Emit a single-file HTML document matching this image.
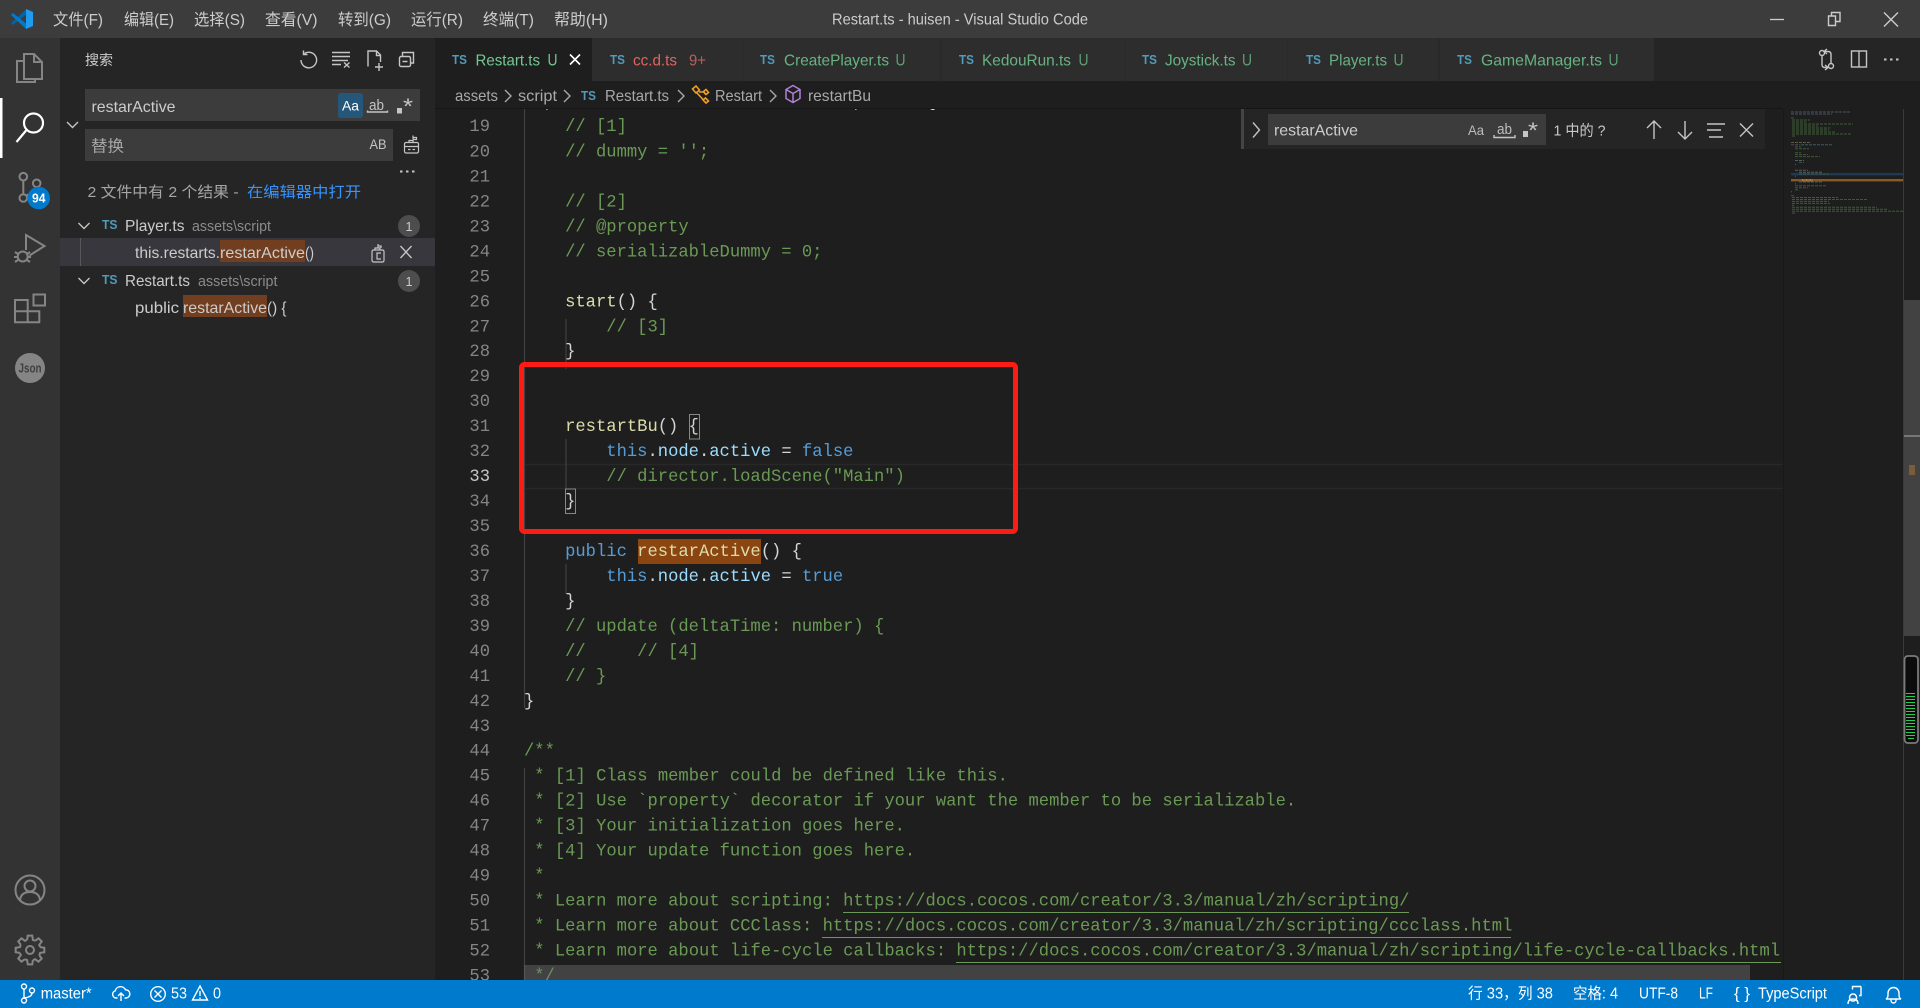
<!DOCTYPE html>
<html lang="zh-CN">
<head>
<meta charset="utf-8">
<title>Restart.ts - huisen - Visual Studio Code</title>
<style>
html,body{margin:0;padding:0;background:#1e1e1e;width:1920px;height:1008px;overflow:hidden}
svg{display:block;position:absolute;left:0;top:0}
text{white-space:pre}
.s{font-family:"Liberation Sans","Noto Sans CJK SC",sans-serif;font-size:16px;fill:#ccc}
.m{font-family:"Liberation Mono","DejaVu Sans Mono",monospace;font-size:17.17px;fill:#d4d4d4}
.n{fill:#858585;text-anchor:end}
.c{fill:#6a9955}.k{fill:#569cd6}.v{fill:#9cdcfe}.f{fill:#dcdcaa}
.ts{font-family:"Liberation Sans",sans-serif;font-size:13px;font-weight:700;fill:#519aba}
.g{fill:#66b380}.u{fill:#5f9f75}
.w{fill:#fff;font-size:15.5px}
.ic{fill:none;stroke:#c5c5c5;stroke-width:1.4}
.ac{fill:none;stroke:#858585;stroke-width:2}
.st{fill:none;stroke:#fff;stroke-width:1.4}
</style>
</head>
<body>
<svg width="1920" height="1008" viewBox="0 0 1920 1008" xmlns="http://www.w3.org/2000/svg">
<!-- editor -->
<rect x="435" y="81" width="1485" height="899" fill="#1e1e1e"/>
<!-- current line -->
<path d="M525 464.5H1783M525 488.5H1783" stroke="#282828" stroke-width="1.4"/>
<!-- indent guides -->
<path d="M524.5 109V708M524.5 768V980M566 319V369M566 439V489M566 564V594" stroke="#404040" stroke-width="1.2"/>
<!-- highlights -->
<rect x="638" y="539" width="123" height="25" fill="#8a4510"/>
<rect x="689.5" y="414.5" width="10" height="24.5" fill="none" stroke="#888" stroke-width="1"/>
<rect x="565.5" y="489" width="10" height="24.5" fill="none" stroke="#888" stroke-width="1"/>
<!-- line numbers -->
<g class="m">
<text class="m n" x="490" y="131.2">19</text><text class="m n" x="490" y="156.3">20</text><text class="m n" x="490" y="181.4">21</text><text class="m n" x="490" y="206.4">22</text><text class="m n" x="490" y="231.4">23</text><text class="m n" x="490" y="256.3">24</text><text class="m n" x="490" y="281.3">25</text><text class="m n" x="490" y="306.3">26</text><text class="m n" x="490" y="331.3">27</text><text class="m n" x="490" y="356.2">28</text><text class="m n" x="490" y="381.2">29</text><text class="m n" x="490" y="406.2">30</text><text class="m n" x="490" y="431.1">31</text><text class="m n" x="490" y="456.1">32</text><text class="m" style="fill:#c6c6c6;text-anchor:end" x="490" y="481.1">33</text><text class="m n" x="490" y="506">34</text><text class="m n" x="490" y="531">35</text><text class="m n" x="490" y="556">36</text><text class="m n" x="490" y="581">37</text><text class="m n" x="490" y="605.9">38</text><text class="m n" x="490" y="630.9">39</text><text class="m n" x="490" y="655.9">40</text><text class="m n" x="490" y="680.8">41</text><text class="m n" x="490" y="705.8">42</text><text class="m n" x="490" y="730.8">43</text><text class="m n" x="490" y="755.7">44</text><text class="m n" x="490" y="780.7">45</text><text class="m n" x="490" y="805.7">46</text><text class="m n" x="490" y="830.7">47</text><text class="m n" x="490" y="855.6">48</text><text class="m n" x="490" y="880.6">49</text><text class="m n" x="490" y="905.6">50</text><text class="m n" x="490" y="930.5">51</text><text class="m n" x="490" y="955.5">52</text><text class="m n" x="490" y="980.5">53</text>
</g>
<!-- code -->
<text class="m" x="524" y="106.5"><tspan style="fill:#c586c0">export</tspan> <tspan class="k">class</tspan> <tspan style="fill:#4ec9b0">Restart</tspan> <tspan class="k">extends</tspan> <tspan style="fill:#4ec9b0">Component</tspan> {</text>
<text class="m c" x="565.1" y="131.2">// [1]</text>
<text class="m c" x="565.1" y="156.3">// dummy = '';</text>
<text class="m c" x="565.1" y="206.4">// [2]</text>
<text class="m c" x="565.1" y="231.4">// @property</text>
<text class="m c" x="565.1" y="256.3">// serializableDummy = 0;</text>
<text class="m" x="565.1" y="306.3"><tspan class="f">start</tspan>() {</text>
<text class="m c" x="606.3" y="331.3">// [3]</text>
<text class="m" x="565.1" y="356.2">}</text>
<text class="m" x="565.1" y="431.1"><tspan class="f">restartBu</tspan>() {</text>
<text class="m" x="606.3" y="456.1"><tspan class="k">this</tspan>.<tspan class="v">node</tspan>.<tspan class="v">active</tspan> = <tspan class="k">false</tspan></text>
<text class="m c" x="606.3" y="481.1">// director.loadScene("Main")</text>
<text class="m" x="565.1" y="506">}</text>
<text class="m" x="565.1" y="556"><tspan class="k">public</tspan> <tspan class="f">restarActive</tspan>() {</text>
<text class="m" x="606.3" y="581"><tspan class="k">this</tspan>.<tspan class="v">node</tspan>.<tspan class="v">active</tspan> = <tspan class="k">true</tspan></text>
<text class="m" x="565.1" y="605.9">}</text>
<text class="m c" x="565.1" y="630.9">// update (deltaTime: number) {</text>
<text class="m c" x="565.1" y="655.9">//     // [4]</text>
<text class="m c" x="565.1" y="680.8">// }</text>
<text class="m" x="524" y="705.8">}</text>
<text class="m c" x="524" y="755.7">/**</text>
<text class="m c" x="524" y="780.7"> * [1] Class member could be defined like this.</text>
<text class="m c" x="524" y="805.7"> * [2] Use `property` decorator if your want the member to be serializable.</text>
<text class="m c" x="524" y="830.7"> * [3] Your initialization goes here.</text>
<text class="m c" x="524" y="855.6"> * [4] Your update function goes here.</text>
<text class="m c" x="524" y="880.6"> *</text>
<text class="m c" x="524" y="905.6"> * Learn more about scripting: https://docs.cocos.com/creator/3.3/manual/zh/scripting/</text>
<text class="m c" x="524" y="930.5"> * Learn more about CCClass: https://docs.cocos.com/creator/3.3/manual/zh/scripting/ccclass.html</text>
<text class="m c" x="524" y="955.5"> * Learn more about life-cycle callbacks: https://docs.cocos.com/creator/3.3/manual/zh/scripting/life-cycle-callbacks.html</text>
<text class="m c" x="524" y="980.5"> */</text>
<path d="M843 912.5H1409M822 937.5H1511M956 962.5H1781" stroke="#6a9955" stroke-width="1"/>
<!-- horizontal scrollbar -->
<rect x="524" y="965" width="1226" height="15" fill="#797979" fill-opacity=".4"/>
<!-- red annotation -->
<rect x="521.5" y="364.5" width="494" height="167" rx="3" fill="none" stroke="#fc1c14" stroke-width="5"/>

<!-- minimap -->
<rect x="1783" y="109" width="120" height="871" fill="#1e1e1e"/>
<rect x="1783" y="109" width="1" height="871" fill="#181818"/>
<rect x="1791" y="173" width="112" height="2.4" fill="#1f3a55"/>
<rect x="1791" y="179" width="112" height="2.4" fill="#8b5a1e"/>
<rect x="1802" y="179" width="11" height="2.4" fill="#c77a1a"/>
<g stroke-width="1" stroke-dasharray="3 1">
<path d="M1791 112H1850M1791 114H1832" stroke="#4a5566"/>
<path d="M1791 142.500H1810" stroke="#5c5c46"/>
<path d="M1791 144.800H1800" stroke="#5c465a"/>
<path d="M1801 144.800H1832" stroke="#3c5c62"/>
<path stroke="#3f5a35" d="M1791 118H1794M1792 120H1810M1792 122H1806M1792 124H1853M1792 126H1818M1792 128H1830M1792 130H1829M1792 132H1835M1792 134H1851M1792 136H1795M1795 146.800h6M1795 148.800h14M1795 152.700h6M1795 154.600h13M1795 156.600h25M1799 162.400h5M1799 174.100h30M1795 185.800h31M1795 187.800h13M1795 189.700h4M1791 195.600h3M1792 197.500h46M1792 199.500h75M1792 201.400h37M1792 203.400h38M1792 205.300h2M1792 207.300h85M1792 209.200h95M1792 211.200h111M1792 213.100h3"/>
<path stroke="#50606a" d="M1795 160.500h9M1795 164.400h1M1795 170.200h13M1799 172.200h24M1795 176.100h1M1795 180h23M1799 181.900h23M1795 183.900h1M1791 191.700h1"/>
</g>
<!-- vertical scrollbar -->
<rect x="1903" y="109" width="1" height="871" fill="#3a3a3a"/>
<rect x="1904" y="300" width="16" height="336" fill="#424242"/>
<rect x="1904" y="435" width="16" height="2" fill="#777"/>
<rect x="1909" y="465" width="6" height="10" fill="#7a5c38"/>
<rect x="1904.500" y="656" width="13.500" height="87" rx="3.500" fill="#0c0c0c" stroke="#7a7a7a" stroke-width="1.800"/>
<path stroke="#22cf4e" stroke-width="1.100" d="M1906 693.500h9M1906 696.500h9M1906 699.500h9M1906 702.500h9M1906 705.500h9M1906 708.500h9M1906 711.500h9M1906 714.500h9M1906 717.500h9M1906 720.500h9M1906 723.500h9M1906 726.500h9M1906 729.500h9M1906 732.500h9M1906 735.500h9M1908 738.500h6"/>

<!-- find widget -->
<rect x="1241" y="109" width="524" height="40" fill="#252526"/>
<rect x="1241" y="109" width="3" height="40" fill="#454545"/>
<rect x="1268" y="114" width="278" height="31" fill="#3c3c3c"/>
<path class="ic" d="M1253 122.500l6.500 7.500-6.500 7.500"/>
<text class="s" x="1274" y="135.500" textLength="84" lengthAdjust="spacingAndGlyphs">restarActive</text>
<text class="s" style="fill:#bdbdbd;font-size:14px" x="1468" y="135" textLength="16" lengthAdjust="spacingAndGlyphs">Aa</text>
<text class="s" style="fill:#bdbdbd;font-size:15px" x="1497" y="134" textLength="15" lengthAdjust="spacingAndGlyphs">ab</text>
<path class="ic" d="M1494 135v2.500h21V135"/>
<rect x="1523" y="131" width="5" height="6" fill="#c5c5c5"/>
<text class="s" style="fill:#c5c5c5;font-size:22px" x="1528" y="138" textLength="10" lengthAdjust="spacingAndGlyphs">*</text>
<text class="s" style="fill:#c8c8c8;font-size:15px" x="1553.500" y="135.500" textLength="52" lengthAdjust="spacingAndGlyphs">1 中的 ?</text>
<path class="ic" d="M1654 139V121M1647 128l7-7 7 7M1685 121v18M1678 132l7 7 7-7M1707 124h18M1707 130h14M1709 137h14M1740 123.500l13 13M1753 123.500l-13 13"/>

<!-- breadcrumb -->
<rect x="435" y="81" width="1485" height="28" fill="#1e1e1e"/>
<rect x="435" y="108" width="1348" height="1" fill="#161616"/>
<text class="s" style="fill:#a9a9a9" x="455" y="101" textLength="43" lengthAdjust="spacingAndGlyphs">assets</text>
<path class="ic" style="stroke:#a9a9a9" d="M505 90l6 6-6 6M564 90l6 6-6 6M678 90l6 6-6 6M770 90l6 6-6 6"/>
<text class="s" style="fill:#a9a9a9" x="518" y="101" textLength="39" lengthAdjust="spacingAndGlyphs">script</text>
<text class="ts" x="581" y="100" textLength="15" lengthAdjust="spacingAndGlyphs">TS</text>
<text class="s" style="fill:#a9a9a9" x="605" y="101" textLength="64" lengthAdjust="spacingAndGlyphs">Restart.ts</text>
<g fill="none" stroke="#ee9d28" stroke-width="1.600">
<path d="M692.500 89l3.500-3 3.500 4-3.500 3zM703.500 91.500l2.500-2 2.500 3-2.500 2zM703 100l2.500-2 3 3-2.500 2z"/>
<path d="M699 92h5l1 2M697 93l6 6.500"/>
</g>
<text class="s" style="fill:#a9a9a9" x="715" y="101" textLength="47" lengthAdjust="spacingAndGlyphs">Restart</text>
<path d="M793 85.500l7 4v9l-7 4-7-4v-9zM786 89.500l7 4 7-4M793 93.500v9" fill="none" stroke="#b180d7" stroke-width="1.500"/>
<text class="s" style="fill:#a9a9a9" x="808" y="101" textLength="63" lengthAdjust="spacingAndGlyphs">restartBu</text>

<!-- tab bar -->
<rect x="435" y="38" width="1485" height="43" fill="#252526"/>
<rect x="435" y="38" width="157" height="43" fill="#1e1e1e"/>
<path d="M592 38h150v43H592zM742.500 38h198v43h-198zM941.500 38h182.500v43H941.500zM1124.500 38h162.500v43h-162.500zM1287.500 38h151v43h-151zM1439.500 38h214.500v43h-214.500z" fill="#2d2d2d"/>
<text class="ts" x="452" y="64" textLength="15" lengthAdjust="spacingAndGlyphs">TS</text>
<text class="s" style="fill:#73c991" x="475.500" y="65.500" textLength="64.500" lengthAdjust="spacingAndGlyphs">Restart.ts</text>
<text class="s" style="fill:#73c991;font-size:17px" x="547.500" y="65.500" textLength="10" lengthAdjust="spacingAndGlyphs">U</text>
<path d="M570 54.500l10 10M580 54.500l-10 10" stroke="#fff" stroke-width="1.600" fill="none"/>
<text class="ts" x="610" y="64" textLength="15" lengthAdjust="spacingAndGlyphs">TS</text>
<text class="s" style="fill:#e2645d" x="633" y="65.500" textLength="44" lengthAdjust="spacingAndGlyphs">cc.d.ts</text>
<text class="s" style="fill:#b9605a" x="689" y="65.500" textLength="17" lengthAdjust="spacingAndGlyphs">9+</text>
<text class="ts" x="760" y="64" textLength="15" lengthAdjust="spacingAndGlyphs">TS</text>
<text class="s g" x="784" y="65.500" textLength="105" lengthAdjust="spacingAndGlyphs">CreatePlayer.ts</text>
<text class="s u" style="font-size:17px" x="895.500" y="65.500" textLength="10" lengthAdjust="spacingAndGlyphs">U</text>
<text class="ts" x="959" y="64" textLength="15" lengthAdjust="spacingAndGlyphs">TS</text>
<text class="s g" x="982" y="65.500" textLength="89" lengthAdjust="spacingAndGlyphs">KedouRun.ts</text>
<text class="s u" style="font-size:17px" x="1078.500" y="65.500" textLength="10" lengthAdjust="spacingAndGlyphs">U</text>
<text class="ts" x="1142" y="64" textLength="15" lengthAdjust="spacingAndGlyphs">TS</text>
<text class="s g" x="1165" y="65.500" textLength="70.500" lengthAdjust="spacingAndGlyphs">Joystick.ts</text>
<text class="s u" style="font-size:17px" x="1242" y="65.500" textLength="10" lengthAdjust="spacingAndGlyphs">U</text>
<text class="ts" x="1306" y="64" textLength="15" lengthAdjust="spacingAndGlyphs">TS</text>
<text class="s g" x="1329" y="65.500" textLength="58" lengthAdjust="spacingAndGlyphs">Player.ts</text>
<text class="s u" style="font-size:17px" x="1393.500" y="65.500" textLength="10" lengthAdjust="spacingAndGlyphs">U</text>
<text class="ts" x="1457" y="64" textLength="15" lengthAdjust="spacingAndGlyphs">TS</text>
<text class="s g" x="1481" y="65.500" textLength="121" lengthAdjust="spacingAndGlyphs">GameManager.ts</text>
<text class="s u" style="font-size:17px" x="1608.500" y="65.500" textLength="10" lengthAdjust="spacingAndGlyphs">U</text>
<!-- editor actions -->
<g class="ic">
<circle cx="1822" cy="53" r="2.500"/><circle cx="1831" cy="66" r="2.500"/>
<path d="M1822 55.500v9q0 3 3 3h2M1831 63.500v-9q0-3-3-3h-3M1827 49l-3 2.500 3 2.500M1825 65l3 2.500-3 2.500"/>
<rect x="1851.500" y="51" width="15" height="16"/><path d="M1859 51v16"/>
</g>
<path d="M1884 59.500h2.500M1890 59.500h2.500M1896 59.500h2.500" stroke="#c5c5c5" stroke-width="2"/>

<!-- title bar -->
<rect x="0" y="0" width="1920" height="38" fill="#3c3c3c"/>
<path d="M11 23l2 2 13-10.500V9.500z" fill="#0065a9"/>
<path d="M11 15l2-2 13 10.500V29z" fill="#007acc"/>
<path d="M26 9l7 3v14l-7 3z" fill="#1f9cf0"/>
<text class="s" x="53" y="25" textLength="50" lengthAdjust="spacingAndGlyphs">文件(F)</text>
<text class="s" x="124" y="25" textLength="50" lengthAdjust="spacingAndGlyphs">编辑(E)</text>
<text class="s" x="194" y="25" textLength="51" lengthAdjust="spacingAndGlyphs">选择(S)</text>
<text class="s" x="265" y="25" textLength="52.500" lengthAdjust="spacingAndGlyphs">查看(V)</text>
<text class="s" x="338" y="25" textLength="53" lengthAdjust="spacingAndGlyphs">转到(G)</text>
<text class="s" x="411" y="25" textLength="52" lengthAdjust="spacingAndGlyphs">运行(R)</text>
<text class="s" x="483" y="25" textLength="51" lengthAdjust="spacingAndGlyphs">终端(T)</text>
<text class="s" x="554" y="25" textLength="54" lengthAdjust="spacingAndGlyphs">帮助(H)</text>
<text class="s" x="832" y="24.500" textLength="256" lengthAdjust="spacingAndGlyphs">Restart.ts - huisen - Visual Studio Code</text>
<path d="M1770 19.500h14" stroke="#ccc" stroke-width="1.300"/>
<path class="ic" style="stroke:#ccc" d="M1828.500 16h7v9.500h-7zM1831.500 16v-3.500h8.500v9h-4.500"/>
<path d="M1884 12.500l14 14M1898 12.500l-14 14" stroke="#ccc" stroke-width="1.400"/>

<!-- activity bar -->
<rect x="0" y="38" width="60" height="942" fill="#333"/>
<rect x="0" y="98" width="2.500" height="60" fill="#fff"/>
<g class="ac">
<path d="M24 54h10l8 8v17H24zM34 54v8h8M24 61h-7v21h18v-3"/>
</g>
<g fill="none" stroke="#fff" stroke-width="2.200">
<circle cx="33.500" cy="123" r="9.500"/><path d="M26.500 130l-10 12"/>
</g>
<g class="ac">
<circle cx="23.300" cy="176.700" r="3.800"/><circle cx="36.700" cy="183.300" r="3.800"/><circle cx="23.300" cy="198" r="3.800"/>
<path d="M23.300 180.500v13.700M36.700 187.100q0 5.500-10 8"/>
<path d="M26 250V235l18.500 11-15 9.500"/>
<circle cx="22.700" cy="256.500" r="5"/>
<path d="M15 252l3 2M30 252l-3 2M14 257h4M31 257h-4M15 262l3-2M30 262l-3-2"/>
<path d="M15 300h12.700v11.300H15zM15 311.300h12.700v11H15zM27.700 311.300h11.600v11H27.700zM33.500 294.500H45v11H33.500z"/>
<circle cx="30" cy="890" r="14.500"/><circle cx="30" cy="886" r="5.500"/>
<path d="M20 900q1-8 10-8t10 8"/>
<circle cx="30" cy="950" r="4"/>
<g transform="translate(30 950)">
<path id="gt" d="M10.090-2.890L14.320-2.270V2.270L10.090 2.890A10.500 10.500 0 0 1 9.180 5.090"/>
<path transform="rotate(45)" d="M10.090-2.890L14.320-2.270V2.270L10.090 2.890A10.500 10.500 0 0 1 9.180 5.090"/>
<path transform="rotate(90)" d="M10.090-2.890L14.320-2.270V2.270L10.090 2.890A10.500 10.500 0 0 1 9.180 5.090"/>
<path transform="rotate(135)" d="M10.090-2.890L14.320-2.270V2.270L10.090 2.890A10.500 10.500 0 0 1 9.180 5.090"/>
<path transform="rotate(180)" d="M10.090-2.890L14.320-2.270V2.270L10.090 2.890A10.500 10.500 0 0 1 9.180 5.090"/>
<path transform="rotate(225)" d="M10.090-2.890L14.320-2.270V2.270L10.090 2.890A10.500 10.500 0 0 1 9.180 5.090"/>
<path transform="rotate(270)" d="M10.090-2.890L14.320-2.270V2.270L10.090 2.890A10.500 10.500 0 0 1 9.180 5.090"/>
<path transform="rotate(315)" d="M10.090-2.890L14.320-2.270V2.270L10.090 2.890A10.500 10.500 0 0 1 9.180 5.090"/>
</g>
</g>
<circle cx="38.700" cy="198" r="11.300" fill="#007acc"/>
<text class="s" style="fill:#fff;font-size:12.500px;font-weight:700" x="32" y="202.500" textLength="13.500" lengthAdjust="spacingAndGlyphs">94</text>
<circle cx="30" cy="368" r="15" fill="#858585"/>
<text class="s" style="fill:#3f3f3f;font-size:13px;font-weight:700" x="18.500" y="372.500" textLength="23" lengthAdjust="spacingAndGlyphs">Json</text>

<!-- sidebar -->
<rect x="60" y="38" width="375" height="942" fill="#252526"/>
<text class="s" style="font-size:14px" x="85" y="65" textLength="28" lengthAdjust="spacingAndGlyphs">搜索</text>
<g class="ic">
<path d="M304.500 53.500a7.800 7.800 0 1 1-3.500 6.500M303.500 50.500v4h4"/>
<path d="M332 52.500h18M332 56.500h18M332 60.500h16M332 64.500h9M344 62.500l5.500 5M349.500 62.500l-5.500 5"/>
<path d="M368 66.500V51h8.500l4 4v7M376.500 51v4.500h4M379 63v8M375 67h8"/>
<rect x="399.500" y="56.500" width="11" height="10" rx="1.500"/><path d="M402.500 56.500V52.500h11V63h-3M402.500 61.500h5"/>
</g>
<rect x="85" y="89" width="335" height="32" fill="#3c3c3c"/>
<rect x="338" y="93" width="25" height="25" rx="3" fill="#245779"/>
<text class="s" style="fill:#fff;font-size:14px" x="342" y="110.500" textLength="17" lengthAdjust="spacingAndGlyphs">Aa</text>
<text class="s" x="91.500" y="112" textLength="84" lengthAdjust="spacingAndGlyphs">restarActive</text>
<text class="s" style="fill:#c5c5c5;font-size:15px" x="369" y="110" textLength="15" lengthAdjust="spacingAndGlyphs">ab</text>
<path class="ic" d="M367.500 110.500v1.500h20v-1.500"/>
<rect x="397" y="108" width="5" height="5.500" fill="#c5c5c5"/>
<text class="s" style="fill:#c5c5c5;font-size:22px" x="403" y="114" textLength="10" lengthAdjust="spacingAndGlyphs">*</text>
<path class="ic" d="M67 122l5.500 5.500 5.500-5.500"/>
<rect x="85" y="129" width="308" height="32" fill="#3c3c3c"/>
<text class="s" style="fill:#a6a6a6" x="91" y="151.500" textLength="33" lengthAdjust="spacingAndGlyphs">替换</text>
<text class="s" style="fill:#c5c5c5;font-size:13.500px" x="369.500" y="149" textLength="17" lengthAdjust="spacingAndGlyphs">AB</text>
<g class="ic" style="stroke-width:1.200">
<rect x="404.500" y="142.500" width="14" height="10.500" rx="1.500"/><path d="M404.500 146.500h14M409 142.500v-2h4v2M413 135.500v4M413 137.500h3.500v2H413M408 149.500h2.500M412.500 149.500h2.500"/>
</g>
<path d="M400 171.500h2.500M406 171.500h2.500M412 171.500h2.500" stroke="#c5c5c5" stroke-width="2"/>
<text class="s" style="fill:#a6a6a6;font-size:15px" x="87.500" y="197" textLength="155.500" lengthAdjust="spacingAndGlyphs">2 文件中有 2 个结果 - </text>
<text class="s" style="fill:#3794ff;font-size:15px" x="247" y="197" textLength="114" lengthAdjust="spacingAndGlyphs">在编辑器中打开</text>
<!-- results -->
<rect x="60" y="238" width="375" height="28" fill="#37373d"/>
<rect x="80" y="238" width="1" height="28" fill="#585858"/>
<rect x="220" y="240" width="85" height="22" fill="#713e1f"/>
<rect x="183" y="295" width="84" height="22" fill="#713e1f"/>
<path class="ic" d="M78.500 223l5.500 5.500 5.500-5.500M78.500 278l5.500 5.500 5.500-5.500"/>
<text class="ts" x="102" y="229" textLength="15.500" lengthAdjust="spacingAndGlyphs">TS</text>
<text class="s" x="125" y="231" textLength="59.500" lengthAdjust="spacingAndGlyphs">Player.ts</text>
<text class="s" style="fill:#8b8b8b;font-size:14.500px" x="192" y="231" textLength="79" lengthAdjust="spacingAndGlyphs">assets\script</text>
<circle cx="409" cy="226" r="11" fill="#4d4d4d"/>
<text class="s" style="font-size:13px" x="405.500" y="231" textLength="7" lengthAdjust="spacingAndGlyphs">1</text>
<text class="s" x="135" y="258" textLength="85" lengthAdjust="spacingAndGlyphs">this.restarts.</text>
<text class="s" x="220" y="258" textLength="85" lengthAdjust="spacingAndGlyphs">restarActive</text>
<text class="s" x="305" y="258" textLength="9" lengthAdjust="spacingAndGlyphs">()</text>
<g class="ic" style="stroke-width:1.200">
<rect x="372" y="250" width="12" height="12" rx="1.500"/><path d="M375 250v-2h5v2M378 244v4M378 246h3v2M381 253h-4v6h4"/>
</g>
<path d="M400.500 246l11 12M411.500 246l-11 12" stroke="#c5c5c5" stroke-width="1.400"/>
<text class="ts" x="102" y="284" textLength="15.500" lengthAdjust="spacingAndGlyphs">TS</text>
<text class="s" x="125" y="286" textLength="65" lengthAdjust="spacingAndGlyphs">Restart.ts</text>
<text class="s" style="fill:#8b8b8b;font-size:14.500px" x="198" y="286" textLength="79.500" lengthAdjust="spacingAndGlyphs">assets\script</text>
<circle cx="409" cy="281" r="11" fill="#4d4d4d"/>
<text class="s" style="font-size:13px" x="405.500" y="286" textLength="7" lengthAdjust="spacingAndGlyphs">1</text>
<text class="s" x="135" y="313" textLength="44" lengthAdjust="spacingAndGlyphs">public</text>
<text class="s" x="183" y="313" textLength="84" lengthAdjust="spacingAndGlyphs">restarActive</text>
<text class="s" x="267" y="313" textLength="19.500" lengthAdjust="spacingAndGlyphs">() {</text>

<!-- status bar -->
<rect x="0" y="980" width="1920" height="28" fill="#007acc"/>
<g class="st">
<circle cx="24" cy="986.500" r="2.500"/><circle cx="24" cy="1000.500" r="2.500"/><circle cx="32" cy="990.500" r="2.500"/>
<path d="M24 989v9M32 993q0 4-8 5"/>
<path d="M117.500 998h-1.500a3.700 3.700 0 0 1-.8-7.200 5.500 5.500 0 0 1 10.300-1 3.700 3.700 0 0 1 .5 8.200h-1.500M121 1001v-8M118 996l3-3 3 3"/>
<circle cx="158" cy="994" r="7.300"/><path d="M154.500 990.500l7 7M161.500 990.500l-7 7"/>
<path d="M200 986l7.500 14h-15zM200 991v5M200 997.500v1.500"/>
<path d="M1861 986.500h-8.500v3M1861 986.500v9h-2M1853 994a3.500 3.500 0 1 0 .1 0M1848 1004q0-5 5-5t5 5"/>
<path d="M1886 999q2-1 2-4v-2a5.500 5.500 0 0 1 11 0v2q0 3 2 4zM1891 999v1.500a2.500 2.500 0 0 0 5 0V999"/>
</g>
<text class="s w" x="40.700" y="998.500" textLength="51" lengthAdjust="spacingAndGlyphs">master*</text>
<text class="s w" x="171" y="998.500" textLength="16" lengthAdjust="spacingAndGlyphs">53</text>
<text class="s w" x="213" y="998.500" textLength="8" lengthAdjust="spacingAndGlyphs">0</text>
<text class="s w" x="1468" y="998.500" textLength="85" lengthAdjust="spacingAndGlyphs">行 33，列 38</text>
<text class="s w" x="1573" y="998.500" textLength="45" lengthAdjust="spacingAndGlyphs">空格: 4</text>
<text class="s w" x="1639" y="998.500" textLength="39" lengthAdjust="spacingAndGlyphs">UTF-8</text>
<text class="s w" x="1699" y="998.500" textLength="14" lengthAdjust="spacingAndGlyphs">LF</text>
<text class="s w" x="1734" y="998.500" textLength="16" lengthAdjust="spacingAndGlyphs">{ }</text>
<text class="s w" x="1758" y="998.500" textLength="69" lengthAdjust="spacingAndGlyphs">TypeScript</text>
</svg>
</body>
</html>
